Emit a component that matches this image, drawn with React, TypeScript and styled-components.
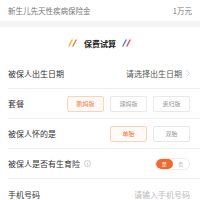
import React, { useState } from "react"
import styled, { createGlobalStyle } from "styled-components"

const GlobalStyle = createGlobalStyle`
  html, body {
    margin: 0;
    padding: 0;
    background: #fff;
    font-family: "Noto Sans CJK SC", "Noto Sans", sans-serif;
  }
`

const Page = styled.div`
  width: 200px;
  height: 200px;
  overflow: hidden;
  background: #fff;
`

const InfoRow = styled.div`
  height: 21px;
  display: flex;
  align-items: center;
  justify-content: space-between;
  padding: 0 8px;
  font-size: 7.5px;
  color: #777;
`

const Band = styled.div`
  height: 6px;
  background: #f4f4f4;
`

const TitleBar = styled.div`
  height: 32px;
  display: flex;
  align-items: center;
  justify-content: center;
  gap: 6px;
  font-size: 8px;
  font-weight: 700;
  color: #222;
`

const Row = styled.div`
  height: 30px;
  margin-left: 8px;
  padding-right: 10px;
  display: flex;
  align-items: center;
  justify-content: space-between;
  border-bottom: ${(p: { last?: boolean }) => (p.last ? "none" : "1px solid #f0f0f0")};
  box-sizing: border-box;
`

const Label = styled.div`
  font-size: 8px;
  color: #333;
  display: flex;
  align-items: center;
  gap: 4px;
`

const Value = styled.div`
  font-size: 8px;
  color: ${(p: { muted?: boolean }) => (p.muted ? "#bbb" : "#555")};
  display: flex;
  align-items: center;
  gap: 4px;
`

const Options = styled.div`
  display: flex;
  gap: 6px;
`

const Option = styled.div`
  width: 37px;
  height: 16px;
  box-sizing: border-box;
  display: flex;
  align-items: center;
  justify-content: center;
  border-radius: 2px;
  font-size: 6px;
  border: 1px solid ${(p: { active?: boolean }) => (p.active ? "#fbd2bc" : "#e8e8e8")};
  color: ${(p: { active?: boolean }) => (p.active ? "#f37a3e" : "#999")};
  background: ${(p: { active?: boolean }) => (p.active ? "#fffaf6" : "#fff")};
`

const Toggle = styled.div`
  width: 35px;
  height: 12px;
  display: flex;
  border-radius: 6px;
  border: 1px solid #ececec;
  box-sizing: border-box;
  overflow: hidden;
`

const ToggleHalf = styled.div`
  flex: 1;
  display: flex;
  align-items: center;
  justify-content: center;
  font-size: 5px;
  border-radius: 6px;
  background: ${(p: { on?: boolean }) => (p.on ? "#ef6a2c" : "#fff")};
  color: ${(p: { on?: boolean }) => (p.on ? "#fff" : "#aaa")};
`

const Slashes = ({ a, b }: { a: string; b: string }) => (
  <svg width="10" height="8" viewBox="0 0 10 8">
    <line x1="1" y1="7" x2="4" y2="1" stroke={a} strokeWidth="1.4" strokeLinecap="round" />
    <line x1="5" y1="7" x2="8" y2="1" stroke={b} strokeWidth="1.4" strokeLinecap="round" />
  </svg>
)

const Chevron = () => (
  <svg width="4" height="7" viewBox="0 0 4 7">
    <polyline points="0.5,0.5 3.5,3.5 0.5,6.5" fill="none" stroke="#ccc" strokeWidth="0.8" />
  </svg>
)

const InfoIcon = () => (
  <svg width="7" height="7" viewBox="0 0 7 7">
    <circle cx="3.5" cy="3.5" r="3" fill="none" stroke="#aaa" strokeWidth="0.6" />
    <line x1="3.5" y1="3" x2="3.5" y2="5.2" stroke="#aaa" strokeWidth="0.6" />
    <circle cx="3.5" cy="2" r="0.35" fill="#aaa" />
  </svg>
)

export default function App() {
  const [plan, setPlan] = useState(0)
  const [twins, setTwins] = useState(0)
  const [insured, setInsured] = useState(true)

  return (
    <Page>
      <GlobalStyle />
      <InfoRow>
        <span>新生儿先天性疾病保险金</span>
        <span>1万元</span>
      </InfoRow>
      <Band />
      <TitleBar>
        <Slashes a="#f5b03a" b="#f07a3a" />
        <span>保费试算</span>
        <Slashes a="#5a7fd0" b="#e8504a" />
      </TitleBar>
      <Row>
        <Label>被保人出生日期</Label>
        <Value>
          请选择出生日期
          <Chevron />
        </Value>
      </Row>
      <Row>
        <Label>套餐</Label>
        <Options>
          {["鹏妈版", "辣妈版", "贵妇版"].map((t, i) => (
            <Option key={t} active={plan === i} onClick={() => setPlan(i)}>
              {t}
            </Option>
          ))}
        </Options>
      </Row>
      <Row>
        <Label>被保人怀的是</Label>
        <Options>
          {["单胎", "双胎"].map((t, i) => (
            <Option key={t} active={twins === i} onClick={() => setTwins(i)}>
              {t}
            </Option>
          ))}
        </Options>
      </Row>
      <Row>
        <Label>
          被保人是否有生育险
          <InfoIcon />
        </Label>
        <Toggle onClick={() => setInsured(!insured)}>
          <ToggleHalf on={insured}>是</ToggleHalf>
          <ToggleHalf on={!insured}>否</ToggleHalf>
        </Toggle>
      </Row>
      <Row last>
        <Label>手机号码</Label>
        <Value muted>请输入手机号码</Value>
      </Row>
    </Page>
  )
}
